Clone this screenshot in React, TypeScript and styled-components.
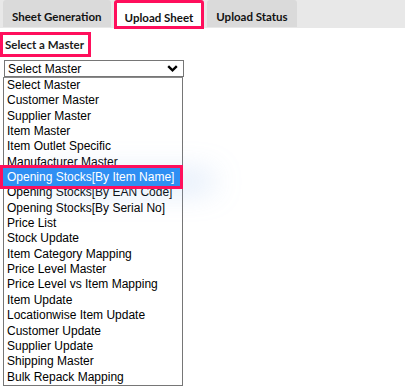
import styled, { createGlobalStyle } from 'styled-components';

const GlobalStyle = createGlobalStyle`
    body {
        margin: 0;
        background: #fff;
    }
`;

const masters = [
    'Select Master',
    'Customer Master',
    'Supplier Master',
    'Item Master',
    'Item Outlet Specific',
    'Manufacturer Master',
    'Opening Stocks[By Item Name]',
    'Opening Stocks[By EAN Code]',
    'Opening Stocks[By Serial No]',
    'Price List',
    'Stock Update',
    'Item Category Mapping',
    'Price Level Master',
    'Price Level vs Item Mapping',
    'Item Update',
    'Locationwise Item Update',
    'Customer Update',
    'Supplier Update',
    'Shipping Master',
    'Bulk Repack Mapping',
];

const TabBar = styled.div`
    display: flex;
    align-items: flex-start;
    gap: 3px;
    height: 28px;
    padding-left: 3px;
    background: #e8e8e8;
`;

const Tab = styled.div<{ active?: boolean }>`
    height: ${(props) => (props.active ? '23px' : '27px')};
    padding: 0 ${(props) => (props.active ? '8px' : '9px')};
    border: ${(props) => (props.active ? '3px solid #ff0f5c' : 'none')};
    border-radius: 3px 3px 0 0;
    background: ${(props) => (props.active ? '#fff' : '#dadada')};
    font-family: Lato, 'Open Sans', sans-serif;
    font-weight: 700;
    font-size: 11.5px;
    line-height: ${(props) => (props.active ? '29px' : '34px')};
    color: #121212;
    white-space: nowrap;
`;

const Content = styled.div`
    padding-top: 4px;
`;

const Label = styled.div`
    display: inline-block;
    height: 19px;
    padding: 0 4px 0 2px;
    border: 3px solid #ff0f5c;
    font-family: Lato, 'Open Sans', sans-serif;
    font-weight: 700;
    font-size: 11.5px;
    line-height: 20px;
    color: #1c1c1c;
`;

const SelectBox = styled.div`
    display: flex;
    align-items: center;
    justify-content: space-between;
    box-sizing: border-box;
    width: 180px;
    height: 17px;
    margin: 3px 0 0 4px;
    padding: 0 5px 0 3px;
    border: 1px solid #767676;
    font-family: 'Liberation Sans', Arial, sans-serif;
    font-size: 12px;
    color: #000;
`;

const ListBox = styled.div`
    box-sizing: border-box;
    width: 180px;
    margin-left: 3px;
    border: 1px solid #767676;
    border-top-color: #8a8a8a;
    font-family: 'Liberation Sans', Arial, sans-serif;
    font-size: 12px;
    color: #000;
`;

const Option = styled.div<{ selected?: boolean }>`
    height: 15.35px;
    line-height: 15.35px;
    padding-left: 3px;
    white-space: nowrap;
    position: relative;
    ${(props) =>
        props.selected &&
        `
        z-index: 1;
        margin-right: 4px;
        color: #fff;
        background: #2f8ff3;
        box-shadow: 0 0 0 2px #2f8ff3, 34px 4px 30px 0 rgba(140, 180, 235, 0.4);
        &::after {
            content: '';
            position: absolute;
            top: -5px;
            bottom: -4px;
            left: -4px;
            right: -5px;
            border: 3px solid #ff0f5c;
        }
    `}
`;

const Chevron = () => (
    <svg width="11" height="7" viewBox="0 0 11 7">
        <polyline points="1.2,1.2 5.5,5.3 9.8,1.2" fill="none" stroke="#000" strokeWidth="2.4" />
    </svg>
);

export default function App() {
    return (
        <>
            <GlobalStyle />
            <TabBar>
                <Tab>Sheet Generation</Tab>
                <Tab active>Upload Sheet</Tab>
                <Tab>Upload Status</Tab>
            </TabBar>
            <Content>
                <Label>Select a Master</Label>
                <SelectBox>
                    <span>Select Master</span>
                    <Chevron />
                </SelectBox>
                <ListBox>
                    {masters.map((m, i) => (
                        <Option key={m} selected={i === 6}>
                            {m}
                        </Option>
                    ))}
                </ListBox>
            </Content>
        </>
    );
}
